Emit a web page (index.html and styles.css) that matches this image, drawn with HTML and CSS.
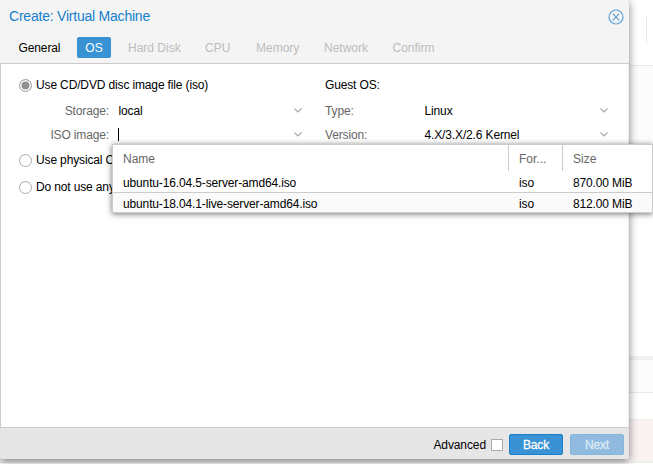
FILE: index.html
```html
<!DOCTYPE html>
<html lang="en">
<head>
<meta charset="utf-8">
<title>Create: Virtual Machine</title>
<link rel="stylesheet" href="styles.css">
</head>
<body>
<div class="screen">
  <div class="backdrop">
    <div class="bd-top"><span class="bd-sep"></span></div>
    <div class="bd-main"></div>
    <div class="bd-split"></div>
    <div class="bd-tabs"></div>
    <div class="bd-log"></div>
    <div class="bd-error"></div>
  </div>
  <div class="window">
    <header class="head">
      <div class="titlebar">
        <h1 class="title">Create: Virtual Machine</h1>
        <svg class="close" viewBox="0 0 16 16"><circle cx="8" cy="8" r="7" /><path d="M4.7 4.7l6.6 6.6M11.3 4.7l-6.6 6.6"/></svg>
      </div>
      <nav class="tabs">
        <span class="tab general">General</span>
        <span class="tab active">OS</span>
        <span class="tab off disk">Hard Disk</span>
        <span class="tab off cpu">CPU</span>
        <span class="tab off memory">Memory</span>
        <span class="tab off network">Network</span>
        <span class="tab off confirm">Confirm</span>
      </nav>
    </header>
    <main class="body">
      <section class="col left">
        <div class="choice"><i class="radio on"></i><span>Use CD/DVD disc image file (iso)</span></div>
        <div class="field"><label>Storage:</label><span class="value">local</span><svg class="arrow" viewBox="0 0 8 5"><path d="M.5.5L4 4 7.500.5"/></svg></div>
        <div class="field"><label>ISO image:</label><span class="value"><i class="caret"></i></span><svg class="arrow" viewBox="0 0 8 5"><path d="M.5.5L4 4 7.500.5"/></svg></div>
        <div class="choice second"><i class="radio"></i><span>Use physical C</span></div>
        <div class="choice third"><i class="radio"></i><span>Do not use any</span></div>
      </section>
      <section class="col right">
        <div class="choice">Guest OS:</div>
        <div class="field"><label>Type:</label><span class="value">Linux</span><svg class="arrow" viewBox="0 0 8 5"><path d="M.5.5L4 4 7.500.5"/></svg></div>
        <div class="field"><label>Version:</label><span class="value">4.X/3.X/2.6 Kernel</span><svg class="arrow" viewBox="0 0 8 5"><path d="M.5.5L4 4 7.500.5"/></svg></div>
      </section>
    </main>
    <footer class="foot">
      <span class="adv">Advanced</span><i class="check"></i>
      <span class="btn">Back</span><span class="btn disabled">Next</span>
    </footer>
  </div>
  <div class="dropdown">
    <div class="row header"><span>Name</span><span>For...</span><span>Size</span></div>
    <div class="row"><span>ubuntu-16.04.5-server-amd64.iso</span><span>iso</span><span>870.00 MiB</span></div>
    <div class="row alt"><span>ubuntu-18.04.1-live-server-amd64.iso</span><span>iso</span><span>812.00 MiB</span></div>
  </div>
</div>
</body>
</html>
```
FILE: styles.css
```css
* { box-sizing: border-box; }
body { margin: 0; font: 12px/16px "Liberation Sans", Arial, sans-serif; letter-spacing: -.14px; color: #000; }
.screen { position: relative; width: 653px; height: 464px; overflow: hidden; background: #fff; white-space: nowrap; }
.backdrop { display: flex; flex-direction: column; height: 464px; }
.bd-top { height: 66px; border-bottom: 1px solid #e9e9e9; padding: 17px 6px 0 0; display: flex; justify-content: flex-end; }
.bd-sep { width: 1px; height: 26px; background: #e8e8e8; }
.bd-main { height: 290px; background: linear-gradient(#fcfcfc 110px, #fff 110px); }
.bd-split { height: 4px; background: #f0f0f0; }
.bd-tabs { height: 33px; background: #fbfbfb; border-bottom: 1px solid #e9e9e9; }
.bd-log { height: 26px; }
.bd-error { height: 44px; background: #faf1f1; border-top: 1px solid #eee; border-bottom: 2px solid #eee; }
.window { position: absolute; left: 0; top: 0; width: 629px; height: 459px; display: flex; flex-direction: column; background: #f4f4f4; border-radius: 3px; box-shadow: 0 2px 8px rgba(0,0,0,.5); }
.head { height: 64px; border-bottom: 1px solid #ccc; background: #f4f4f4; border-radius: 3px 3px 0 0; }
.titlebar { display: flex; justify-content: space-between; height: 37px; padding: 8px 5px 0 9px; }
.title { margin: 0; font-size: 14px; line-height: 16px; font-weight: 400; letter-spacing: -.22px; color: #157fcc; }
.close { width: 16px; height: 16px; margin-top: 1px; fill: none; stroke: #5b9fd3; stroke-width: 1.2; }
.tabs { display: flex; height: 21px; line-height: 22px; letter-spacing: 0; }
.tab { flex: none; }
.general { width: 58.500px; margin-left: 18.500px; letter-spacing: -.12px; }
.active { width: 34px; background: #3892d4; color: #fff; text-align: center; border-radius: 2px; }
.off { color: #bcbcbc; }
.disk { width: 77px; margin-left: 17px; }
.cpu { width: 51px; }
.memory { width: 68px; }
.network { width: 68.500px; }
.body { flex: 1; display: flex; background: #fff; border-left: 1px solid #ccc; border-right: 1px solid #eee; padding: 9px 0 0 18px; }
.left { width: 306px; }
.right { width: 300px; }
.choice { display: flex; align-items: center; height: 24px; gap: 4px; }
.second { margin-top: 3px; }
.third { margin-top: 3px; }
.radio { width: 13px; height: 13px; border: 1px solid #aaa; border-radius: 50%; background: #fff; }
.radio.on { background: #919191; box-shadow: inset 0 0 0 1.500px #fff; }
.field { display: flex; align-items: center; height: 24px; padding-top: 3px; }
.field label { width: 90px; text-align: right; color: #666; }
.value { flex: 1; padding-left: 9.500px; }
.caret { display: block; width: 1px; height: 13px; margin-left: -.6px; background: #000; }
.arrow { width: 8px; height: 5px; margin: 0 23px 2px 0; fill: none; stroke: #aaa; stroke-width: 1.2; position: relative; top: 1px; }
.right .field label { text-align: left; }
.right .arrow { margin-right: 17px; }
.foot { height: 32px; border-top: 1px solid #ccc; background: #e6e6e6; display: flex; align-items: center; justify-content: flex-end; padding: 1px 5px 0 0; border-radius: 0 0 3px 3px; }
.adv { padding-top: 1px; letter-spacing: -.1px; }
.check { width: 12px; height: 12px; margin: 1px 6px 0 5px; border: 1px solid #aaa; background: #fff; }
.btn { width: 54px; height: 21px; line-height: 21px; border: 1px solid #157fcc; border-radius: 2px; background: #3892d4; color: #fff; text-align: center; -webkit-text-stroke: .3px; }
.disabled { margin-left: 7px; background: #90bbdf; border-color: #84b7dd; color: #dceaf6; }
.dropdown { position: absolute; left: 112px; top: 144px; width: 541px; height: 69px; border: 1px solid #ccc; background: #fff; box-shadow: 0 1px 6px rgba(0,0,0,.55); }
.row { display: grid; grid-template-columns: 395px 54px 1fr; height: 21px; line-height: 24px; }
.row span { padding-left: 10px; }
.row span + span { padding-left: 11px; }
.header { height: 26px; line-height: 28px; color: #666; letter-spacing: 0; }
.header span { height: 26px; }
.header span + span { border-left: 1px solid #ccc; padding-left: 10px; }
.alt { height: 20px; line-height: 22px; background: #fafafa; border-top: 1px solid #ccc; }
```
